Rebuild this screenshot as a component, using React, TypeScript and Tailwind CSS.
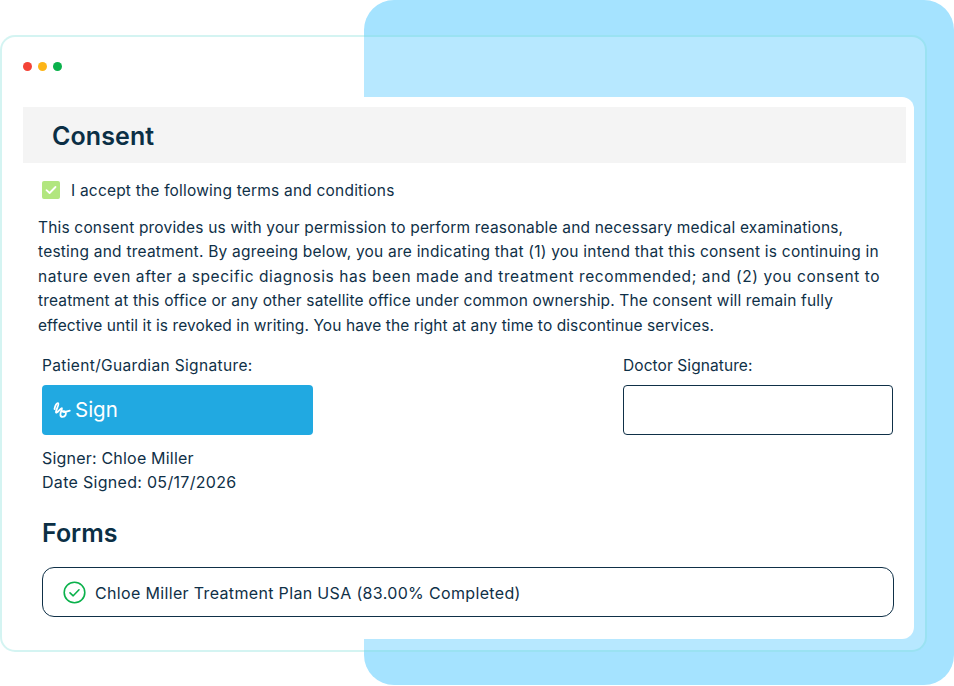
import React from 'react';

const font = "font-['Inter','Liberation_Sans',sans-serif]";

function Squiggle() {
  return (
    <svg width="18" height="18" viewBox="0 0 18 18" fill="none" stroke="white" strokeWidth="1.8" strokeLinecap="round" strokeLinejoin="round">
      <path d="M1.5 8 C2 4.5 4 1.5 5.2 2.2 C6.6 3.2 2.4 9.5 3 11.5 C3.6 13 7.5 7 8.8 7.2 C9.8 7.6 7 11.5 7.4 14 C7.8 16.6 11.4 16.4 12.6 14 C13.6 11.8 12 10 10.2 10.2 C9.2 10.4 10 11.2 11.4 11 C13.4 10.8 15.2 10 16.8 9.6" />
    </svg>
  );
}

export default function App() {
  return (
    <div className={`relative w-[954px] h-[686px] overflow-hidden bg-white ${font} text-[#0f3047]`}>
      {/* blue panel behind the window */}
      <div className="absolute left-[364px] top-0 w-[590px] h-[685px] bg-[#a5e3ff] rounded-[30px]" />

      <div className="relative pt-[35px]">
        <div className="w-[927px] h-[617px] rounded-[15px] border-2 border-[#28c8be]/20 bg-white/20">
          <div className="flex gap-[6px] pl-[21px] pt-[25px]">
            <span className="w-[9px] h-[9px] rounded-full bg-[#f44336]" />
            <span className="w-[9px] h-[9px] rounded-full bg-[#fdb517]" />
            <span className="w-[9px] h-[9px] rounded-full bg-[#0ab14b]" />
          </div>

          <div className="ml-[14px] mt-[26px] w-[898px] h-[542px] bg-white rounded-[12px] pt-[10px] pl-[7px]">
            <div className="w-[883px] h-[56px] bg-[#f4f4f4] flex items-center pl-[29px] pt-[2px]">
              <h1 className="text-[25px] leading-none font-semibold tracking-[0.1px] text-[#0b2f45]">Consent</h1>
            </div>

            <div className="flex items-center gap-[11px] ml-[19px] mt-[18px] h-[18px]">
              <span className="w-[18px] h-[18px] rounded-[2px] bg-[#b2e67f] flex items-center justify-center">
                <svg width="12" height="10" viewBox="0 0 12 10" fill="none" stroke="white" strokeWidth="1.8" strokeLinecap="round" strokeLinejoin="round">
                  <path d="M1.5 5.2 L4.6 8 L10.5 2" />
                </svg>
              </span>
              <span className="text-[15.5px] leading-none tracking-[0.2px] whitespace-nowrap pt-[1px]">I accept the following terms and conditions</span>
            </div>

            <div className="ml-[15px] mt-[17px] text-[15.5px] leading-[24.4px] whitespace-nowrap">
              <p className="tracking-[0.18px]">This consent provides us with your permission to perform reasonable and necessary medical examinations,</p>
              <p className="tracking-[0.225px]">testing and treatment. By agreeing below, you are indicating that (1) you intend that this consent is continuing in</p>
              <p className="tracking-[0.59px]">nature even after a specific diagnosis has been made and treatment recommended; and (2) you consent to</p>
              <p className="tracking-[0.15px]">treatment at this office or any other satellite office under common ownership. The consent will remain fully</p>
              <p className="tracking-[0.085px]">effective until it is revoked in writing. You have the right at any time to discontinue services.</p>
            </div>

            <div className="flex ml-[19px] mt-[16px]">
              <div className="w-[581px]">
                <div className="text-[15.5px] leading-[24px] tracking-[0.35px]">Patient/Guardian Signature:</div>
                <div className="mt-[7px] w-[271px] h-[50px] rounded-[4px] bg-[#21a9e1] flex items-center gap-[4px] pl-[11px] text-white">
                  <Squiggle />
                  <span className="text-[20.5px] leading-none">Sign</span>
                </div>
                <div className="mt-[11px] text-[16px] leading-[24px] tracking-[0.2px]">Signer: Chloe Miller</div>
                <div className="text-[16px] leading-[24px] tracking-[0.3px]">Date Signed: 05/17/2026</div>
              </div>
              <div>
                <div className="text-[15.5px] leading-[24px] tracking-[0.08px]">Doctor Signature:</div>
                <div className="mt-[7px] w-[270px] h-[50px] rounded-[4px] border-[1.5px] border-[#0f3047] bg-white" />
              </div>
            </div>

            <h2 className="ml-[19px] mt-[24px] text-[25px] leading-[30px] font-semibold text-[#0b2f45]">Forms</h2>

            <div className="ml-[19px] mt-[19px] w-[852px] h-[50px] rounded-[12px] border-[1.5px] border-[#0f3047] flex items-center gap-[9px] pl-[20px] pt-[1px]">
              <svg width="23" height="23" viewBox="0 0 23 23" fill="none" stroke="#0ab14b" strokeWidth="1.6" strokeLinecap="round" strokeLinejoin="round">
                <circle cx="11.5" cy="11.5" r="10.3" />
                <path d="M7 11.8 L10.2 14.8 L16 8.8" />
              </svg>
              <span className="text-[16px] leading-none tracking-[0.34px] whitespace-nowrap">Chloe Miller Treatment Plan USA (83.00% Completed)</span>
            </div>
          </div>
        </div>
      </div>
    </div>
  );
}
